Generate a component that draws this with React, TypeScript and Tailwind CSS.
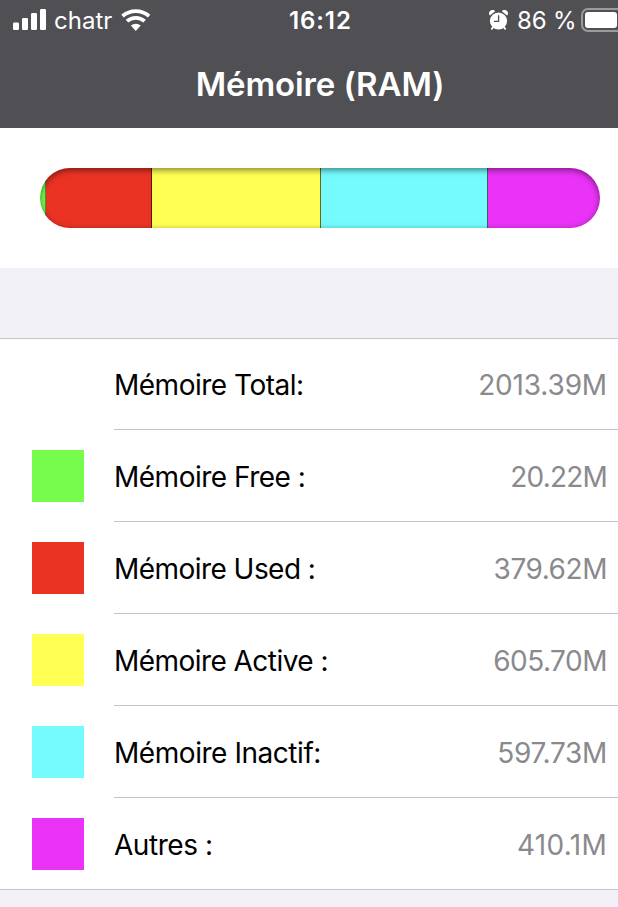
import React from 'react';

interface MemoryRow {
  label: string;
  value: string;
  color?: string;
  labelSpacing: string;
  valueSpacing: string;
}

const rows: MemoryRow[] = [
  {
    label: 'Mémoire Total:',
    value: '2013.39M',
    labelSpacing: 'tracking-[-0.5px]',
    valueSpacing: 'tracking-[-0.15px]',
  },
  {
    label: 'Mémoire Free :',
    value: '20.22M',
    color: 'bg-[#75fc4c]',
    labelSpacing: 'tracking-[-0.5px]',
    valueSpacing: 'tracking-[-0.8px]',
  },
  {
    label: 'Mémoire Used :',
    value: '379.62M',
    color: 'bg-[#ea3323]',
    labelSpacing: 'tracking-[-0.55px]',
    valueSpacing: 'tracking-[-0.45px]',
  },
  {
    label: 'Mémoire Active :',
    value: '605.70M',
    color: 'bg-[#ffff54]',
    labelSpacing: 'tracking-[-0.55px]',
    valueSpacing: 'tracking-[-0.5px]',
  },
  {
    label: 'Mémoire Inactif:',
    value: '597.73M',
    color: 'bg-[#75fbfd]',
    labelSpacing: 'tracking-[-0.45px]',
    valueSpacing: 'tracking-[-0.3px]',
  },
  {
    label: 'Autres :',
    value: '410.1M',
    color: 'bg-[#ea33f7]',
    labelSpacing: 'tracking-[-0.45px]',
    valueSpacing: 'tracking-[0.3px]',
  },
];

const SignalIcon = () => (
  <svg width="34" height="22" viewBox="0 0 34 22" fill="white" className="shrink-0">
    <rect x="0" y="13.5" width="6" height="7.5" rx="1.3" />
    <rect x="9" y="9" width="6" height="12" rx="1.3" />
    <rect x="18" y="4" width="6" height="17" rx="1.3" />
    <rect x="27" y="0" width="6" height="21" rx="1.3" />
  </svg>
);

const WifiIcon = () => (
  <svg width="30" height="22" viewBox="0 0 30 22" fill="none" stroke="white" strokeWidth="3.8" className="shrink-0">
    <path d="M1.5 7.1A20 20 0 0 1 28.1 7.1" />
    <path d="M6 12.2A13.2 13.2 0 0 1 23.6 12.2" />
    <path d="M14.8 22L9.9 16.6A7.3 7.3 0 0 1 19.7 16.6Z" fill="white" stroke="none" />
  </svg>
);

const AlarmIcon = () => (
  <svg width="20" height="21" viewBox="0 0 20 21" fill="none" className="shrink-0">
    <path d="M.9 5.6A3.3 3.3 0 0 1 6.2 1.2Z" fill="white" />
    <path d="M18.1 5.6A3.3 3.3 0 0 0 12.8 1.2Z" fill="white" />
    <path d="M4.3 17L2.8 18.9M14.7 17L16.2 18.9" stroke="white" strokeWidth="1.8" strokeLinecap="round" />
    <circle cx="9.5" cy="11" r="8.6" fill="white" />
    <path d="M9.6 5.2V11.4H5" stroke="#504f54" strokeWidth="1.3" />
  </svg>
);

const StatusBar = () => (
  <div className="flex h-10 items-center overflow-hidden pl-[13px] text-2xl leading-none">
    <SignalIcon />
    <span className="ml-[7px] w-[60px] shrink-0 pt-0.5 whitespace-nowrap">chatr</span>
    <span className="ml-[7px] shrink-0"><WifiIcon /></span>
    <span className="ml-[138px] w-[70px] shrink-0 pt-0.5 font-semibold tracking-[0.9px] whitespace-nowrap">16:12</span>
    <span className="ml-[130px] shrink-0"><AlarmIcon /></span>
    <span className="ml-[8px] w-[60px] shrink-0 pt-0.5 tracking-[-0.2px] whitespace-nowrap">86 %</span>
    <div className="ml-1 h-6 w-[50px] shrink-0 rounded-[7px] border-2 border-[#9b9a9e] p-0.5">
      <div className="h-4 w-8 rounded-[3px] bg-white" />
    </div>
  </div>
);

// Segment widths include the one pixel divider on their right
const MemoryBar = () => (
  <div className="relative flex h-[60px] overflow-hidden rounded-full">
    <div className="w-1.5 border-r border-black/40 bg-[#75fc4c]" />
    <div className="w-[106px] border-r border-black/60 bg-[#ea3323]" />
    <div className="w-[169px] border-r border-black/60 bg-[#ffff54]" />
    <div className="w-[167px] border-r border-black/60 bg-[#75fbfd]" />
    <div className="flex-1 bg-[#ea33f7]" />
    <div className="absolute inset-0 rounded-full shadow-[inset_0_2px_6px_rgba(0,0,0,0.5)]" />
  </div>
);

const App: React.FC = () => {
  return (
    <div className="h-[907px] w-[618px] overflow-hidden bg-[#f2f1f7] font-['Inter',sans-serif]">
      <header className="h-32 bg-[#504f54] text-white">
        <StatusBar />
        <h1 className="ml-[22px] pt-6 text-center text-[33px] leading-10 font-semibold tracking-[-0.1px]">
          Mémoire (RAM)
        </h1>
      </header>

      <section className="h-[140px] bg-white pt-10 pr-[18px] pl-10">
        <MemoryBar />
      </section>

      <ul className="mt-[70px] bg-white shadow-[inset_0_1px_0_#c5c4c9]">
        {rows.map((row, index) => (
          <li key={row.label} className={`flex h-[92px] ${index === rows.length - 1 ? 'border-b border-[#c5c4c9]' : ''}`}>
            <div className="w-[114px] shrink-0 pt-5 pl-8">
              {row.color && <div className={`size-[52px] ${row.color}`} />}
            </div>
            <div
              className={`flex flex-1 items-center justify-between pt-1 pr-[11px] text-[28px] leading-[41px] ${
                index < rows.length - 1 ? 'border-b border-[#c5c4c9]' : ''
              }`}
            >
              <span className={`text-black ${row.labelSpacing}`}>{row.label}</span>
              <span className={`text-[#8a8a8e] ${row.valueSpacing}`}>{row.value}</span>
            </div>
          </li>
        ))}
      </ul>
    </div>
  );
};

export default App;
